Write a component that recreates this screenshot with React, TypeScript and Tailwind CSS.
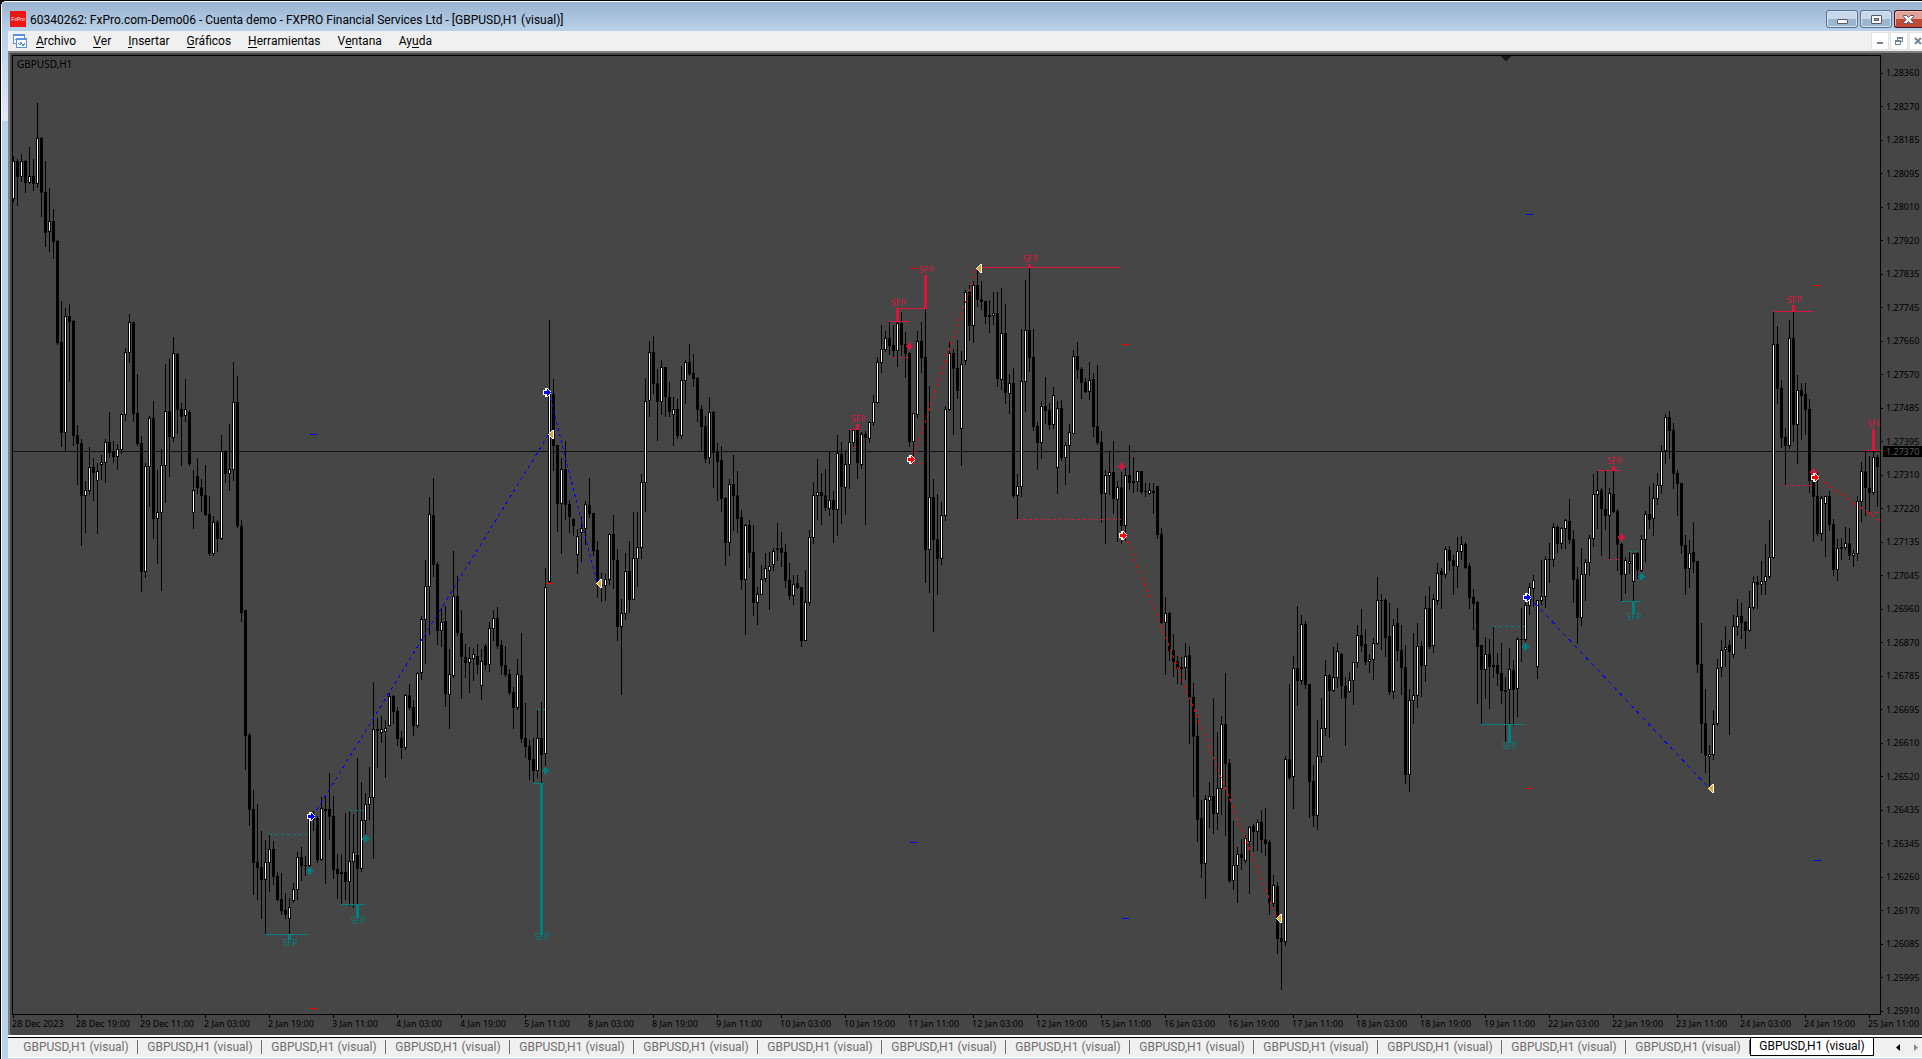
type Bar = [high: number, open: number, close: number, low: number];

interface Session {
  top: number;
  unit: number;
  bars: Bar[];
}

// Each session keeps its own vertical grid: row = top + value / unit.
const SESSIONS: Session[] = [
  {
    top: 80,
    unit: 2.958,
    bars: [
      [225, 352, 240, 360], [234, 240, 287, 373], [219, 287, 240, 301], [237, 240, 304, 334],
      [198, 304, 284, 307], [234, 284, 307, 328], [68, 307, 172, 319], [169, 172, 333, 405],
      [240, 331, 453, 493], [320, 450, 417, 509], [382, 417, 478, 530], [473, 476, 778, 783],
      [654, 775, 1044, 1086], [675, 1043, 699, 1098], [663, 698, 716, 893], [710, 713, 1053, 1083],
      [1021, 1050, 1077, 1198], [1062, 1074, 1231, 1379], [1186, 1230, 1213, 1340], [1086, 1216, 1145, 1228],
      [1118, 1145, 1162, 1246], [1133, 1186, 1157, 1343], [1109, 1138, 1130, 1183], [1062, 1132, 1071, 1192],
      [982, 1071, 1103, 1118], [1068, 1101, 1114, 1133], [1077, 1114, 1092, 1154], [985, 1095, 988, 1106],
      [793, 991, 805, 1009], [692, 808, 716, 837], [713, 716, 988, 1011], [870, 985, 1077, 1083],
      [1053, 1074, 1456, 1515], [1133, 1456, 1142, 1473], [994, 1145, 1000, 1263], [950, 1000, 1299, 1358],
      [1154, 1299, 1278, 1432], [1092, 1281, 1139, 1512], [840, 1142, 979, 1251], [825, 979, 1056, 1175],
      [760, 1059, 808, 1071], [808, 811, 976, 1047], [956, 973, 997, 1142], [885, 994, 973, 1011],
      [976, 982, 1136, 1142], [1154, 1281, 1213, 1328], [1118, 1172, 1207, 1225], [1180, 1204, 1231, 1278],
      [1139, 1228, 1287, 1290], [1231, 1284, 1402, 1408], [1290, 1402, 1308, 1408], [1302, 1308, 1358, 1396],
      [1050, 1358, 1098, 1361], [1095, 1098, 1166, 1192], [1018, 1166, 1151, 1216], [834, 1154, 953, 1186],
      [876, 953, 1319, 1325],
    ],
  },
  {
    top: 340,
    unit: 2.529,
    bars: [
      [455, 470, 690, 713], [683, 683, 1001, 1087], [994, 999, 1189, 1229], [1138, 1186, 1323, 1404],
      [1173, 1320, 1335, 1416], [1242, 1332, 1366, 1464], [1265, 1365, 1320, 1502], [1250, 1322, 1287, 1396],
      [1267, 1287, 1358, 1379], [1345, 1356, 1416, 1419], [1348, 1414, 1445, 1454], [1399, 1442, 1454, 1464],
      [1411, 1464, 1434, 1502], [1373, 1419, 1388, 1424], [1295, 1391, 1308, 1416], [1282, 1308, 1330, 1368],
      [1305, 1328, 1330, 1356], [1200, 1330, 1205, 1332], [1190, 1200, 1214, 1242], [1204, 1209, 1315, 1323],
      [1156, 1315, 1184, 1318], [1151, 1186, 1190, 1376], [1095, 1186, 1206, 1265], [1153, 1204, 1340, 1363],
      [1300, 1338, 1351, 1414], [1300, 1345, 1351, 1426], [1196, 1345, 1371, 1416], [1190, 1370, 1318, 1431],
      [1199, 1320, 1295, 1436], [1057, 1302, 1338, 1426], [1118, 1337, 1214, 1345], [1146, 1216, 1174, 1249],
      [1080, 1176, 1156, 1214], [865, 1158, 984, 1313], [956, 984, 989, 1082], [951, 995, 984, 1019],
      [961, 991, 981, 1108], [893, 976, 900, 976], [898, 900, 941, 971], [928, 938, 1009, 1027],
      [989, 1007, 1032, 1060], [895, 1032, 898, 1037], [870, 898, 931, 936], [910, 928, 976, 1001],
      [840, 976, 842, 981], [698, 842, 706, 860], [556, 708, 622, 819], [397, 625, 440, 746],
      [349, 443, 569, 599], [561, 567, 736, 771], [678, 736, 713, 776], [673, 711, 895, 928],
      [781, 897, 845, 984], [534, 850, 647, 855], [597, 647, 741, 749], [683, 741, 802, 908],
      [769, 802, 817, 855], [776, 817, 804, 893], [779, 806, 793, 862], [769, 799, 822, 845],
      [781, 875, 812, 910], [769, 774, 822, 835], [713, 822, 728, 840], [683, 731, 703, 761],
      [675, 703, 774, 781], [759, 771, 824, 847], [774, 822, 847, 852], [832, 845, 893, 898],
      [878, 890, 931, 984], [807, 931, 845, 936], [741, 847, 1009, 1019], [918, 1007, 1029, 1057],
      [1012, 1027, 1062, 1113], [1007, 1060, 1090, 1118], [936, 1090, 1007, 1108], [916, 1007, 1049, 1120],
      [577, 1047, 625, 1077],
    ],
  },
  {
    top: 290,
    unit: 3,
    bars: [
      [90, 876, 305, 879], [267, 312, 468, 543], [465, 465, 642, 726], [504, 643, 537, 792],
      [453, 537, 645, 690], [630, 642, 681, 729], [684, 687, 708, 738], [717, 795, 738, 852],
      [678, 728, 714, 816], [633, 717, 642, 765], [564, 645, 672, 684], [669, 669, 783, 798],
      [753, 780, 876, 924], [849, 885, 889, 936], [852, 888, 867, 933], [729, 870, 732, 885],
      [675, 732, 810, 897], [777, 810, 1011, 1053], [927, 1011, 969, 1215], [789, 972, 843, 990],
      [753, 843, 930, 969], [666, 930, 804, 930], [666, 807, 771, 891], [552, 774, 576, 807],
      [264, 579, 333, 666], [153, 333, 186, 381], [138, 186, 282, 312], [237, 279, 336, 453],
      [210, 336, 231, 375], [231, 231, 321, 381], [276, 321, 366, 381], [321, 375, 357, 468],
      [327, 357, 438, 447], [228, 438, 270, 447], [210, 273, 216, 342], [162, 216, 252, 258],
      [192, 249, 267, 291], [261, 264, 360, 396], [345, 357, 411, 483], [378, 408, 507, 519],
      [321, 504, 366, 522], [363, 366, 489, 594], [459, 486, 516, 633], [468, 510, 627, 666],
      [621, 624, 759, 828], [567, 759, 582, 798], [495, 582, 618, 723], [543, 615, 687, 729],
      [660, 681, 870, 900], [702, 870, 705, 1035], [690, 705, 789, 834], [705, 786, 939, 978],
      [891, 939, 912, 1005], [825, 915, 867, 915], [789, 867, 834, 876], [786, 843, 828, 960],
      [774, 825, 783, 843], [699, 781, 774, 813], [726, 774, 789, 831], [762, 786, 873, 894],
      [819, 870, 918, 930], [855, 918, 882, 945], [855, 879, 894, 897], [891, 891, 1053, 1071],
    ],
  },
  {
    top: 240,
    unit: 3,
    bars: [
      [990, 1203, 1086, 1203], [870, 1089, 891, 1098], [726, 894, 765, 912], [657, 768, 756, 840],
      [699, 756, 768, 855], [687, 765, 804, 813], [636, 807, 780, 828], [753, 780, 810, 909],
      [585, 810, 639, 888], [606, 642, 741, 852], [630, 744, 672, 825], [570, 675, 606, 747],
      [570, 609, 570, 621], [570, 570, 669, 717], [576, 675, 582, 687], [573, 582, 594, 855],
      [543, 597, 546, 609], [465, 549, 486, 558], [351, 489, 366, 492], [255, 369, 327, 399],
      [273, 330, 294, 336], [246, 294, 318, 345], [255, 315, 333, 351], [246, 333, 249, 381],
      [216, 249, 315, 348], [276, 312, 342, 414], [336, 339, 606, 621], [519, 606, 519, 669],
      [273, 525, 303, 534], [246, 303, 354, 399], [207, 351, 930, 1029], [438, 930, 771, 1059],
      [717, 771, 900, 1176], [762, 897, 957, 1065], [786, 957, 825, 975], [498, 828, 507, 843],
      [306, 510, 339, 513], [327, 339, 387, 585], [300, 384, 453, 477], [333, 567, 372, 678],
      [150, 363, 156, 375], [135, 156, 258, 303], [123, 258, 135, 309], [90, 135, 180, 201],
      [123, 177, 186, 210], [183, 183, 231, 252], [180, 225, 231, 279], [156, 228, 219, 255],
      [156, 219, 417, 441], [144, 420, 279, 450], [192, 279, 459, 492], [402, 462, 429, 522],
      [384, 429, 768, 774], [702, 768, 738, 837], [267, 741, 423, 771], [120, 426, 270, 516],
      [84, 270, 354, 396], [267, 351, 561, 573], [546, 558, 609, 690], [483, 609, 498, 657],
      [411, 498, 513, 552], [489, 510, 555, 570], [441, 555, 465, 567], [483, 684, 504, 762],
      [480, 504, 654, 663], [606, 654, 615, 735], [552, 618, 576, 699], [330, 582, 348, 582],
      [306, 348, 390, 417], [381, 387, 429, 477], [414, 426, 456, 459], [366, 456, 420, 480],
      [399, 417, 561, 591], [375, 558, 609, 615], [573, 606, 762, 849], [690, 762, 705, 912],
      [633, 708, 696, 765], [603, 696, 777, 822], [723, 780, 741, 906], [696, 741, 858, 912],
      [684, 858, 705, 903], [615, 705, 729, 750], [651, 723, 729, 759], [693, 726, 693, 756],
      [693, 693, 756, 762], [729, 753, 757, 771], [729, 762, 750, 765], [729, 753, 759, 822],
      [738, 738, 885, 897], [864, 882, 1149, 1152],
    ],
  },
  {
    top: 440,
    unit: 2.751,
    bars: [
      [432, 503, 476, 646], [473, 476, 580, 608], [534, 578, 611, 652], [594, 608, 630, 671],
      [597, 624, 630, 674], [558, 627, 594, 660], [567, 591, 710, 836], [668, 707, 817, 982],
      [756, 814, 1045, 1106], [990, 1040, 1166, 1205], [977, 1166, 988, 1263], [941, 993, 979, 1067],
      [710, 979, 1029, 1084], [803, 1029, 957, 1073], [759, 960, 781, 1032], [641, 781, 891, 1089],
      [878, 889, 1213, 1218], [1048, 1213, 1169, 1238], [1120, 1172, 1139, 1274], [1098, 1139, 1150, 1183],
      [1087, 1158, 1095, 1163], [1062, 1106, 1065, 1249], [1056, 1062, 1078, 1133], [1043, 1078, 1051, 1131],
      [1018, 1051, 1100, 1136], [1012, 1098, 1111, 1144], [1100, 1106, 1274, 1307], [1197, 1276, 1224, 1285],
      [1216, 1227, 1373, 1414], [1320, 1370, 1381, 1513], [869, 1381, 878, 1392], [671, 878, 930, 935],
      [594, 927, 627, 1015], [457, 627, 663, 732], [481, 663, 506, 674], [498, 506, 674, 685],
      [671, 671, 941, 1040], [894, 938, 1034, 1065], [770, 1034, 869, 1073], [710, 872, 792, 889],
      [605, 795, 646, 814], [644, 646, 690, 820], [569, 690, 652, 693], [558, 655, 580, 682],
      [586, 589, 677, 712], [652, 677, 710, 842], [638, 693, 660, 696], [611, 663, 611, 729],
      [509, 613, 536, 627], [465, 536, 567, 583], [520, 561, 611, 619], [589, 610, 602, 641],
      [545, 605, 558, 660], [377, 561, 440, 564], [424, 440, 443, 578], [435, 440, 545, 597],
      [448, 539, 693, 701], [492, 693, 509, 712], [462, 503, 580, 608],
    ],
  },
  {
    top: 400,
    unit: 3,
    bars: [
      [675, 750, 804, 885], [735, 801, 1125, 1152], [867, 1125, 900, 1176], [699, 903, 885, 972],
      [669, 888, 738, 924], [723, 738, 798, 891], [588, 798, 624, 846], [558, 624, 741, 747],
      [582, 738, 597, 759], [489, 603, 519, 615], [504, 513, 525, 627], [438, 525, 447, 534],
      [438, 450, 483, 513], [465, 480, 498, 585], [411, 501, 453, 564], [408, 456, 432, 480],
      [426, 432, 504, 507], [489, 498, 594, 627], [567, 591, 612, 690], [603, 606, 741, 912],
      [735, 735, 810, 972], [711, 810, 762, 897], [717, 762, 801, 927], [681, 795, 801, 834],
      [759, 795, 822, 858], [729, 819, 873, 912], [831, 870, 876, 1026], [744, 870, 807, 972],
      [780, 810, 870, 978], [711, 867, 717, 951], [624, 717, 720, 786], [606, 720, 615, 726],
      [549, 618, 561, 645], [525, 567, 540, 621], [600, 801, 600, 837], [480, 603, 588, 615],
      [468, 591, 477, 624], [429, 477, 480, 549], [369, 480, 381, 501], [375, 381, 432, 459],
      [381, 432, 384, 447], [357, 387, 360, 447], [297, 363, 420, 432], [390, 417, 540, 609],
      [501, 537, 654, 732], [444, 654, 522, 678], [477, 525, 486, 603], [405, 489, 414, 528],
      [222, 417, 282, 441], [210, 285, 270, 387], [264, 270, 327, 468], [210, 327, 348, 390],
      [264, 348, 279, 477], [210, 282, 336, 339], [327, 333, 435, 513], [429, 432, 525, 603],
      [471, 525, 480, 582], [456, 492, 484, 522], [459, 546, 459, 603], [456, 459, 510, 537],
      [405, 513, 417, 516], [333, 420, 342, 486], [258, 342, 360, 387], [249, 357, 294, 408],
      [219, 297, 255, 315], [135, 258, 153, 282], [42, 153, 51, 192], [33, 51, 93, 177],
      [69, 90, 222, 267], [210, 219, 252, 348], [249, 249, 438, 462], [405, 435, 507, 585],
      [420, 507, 459, 564], [366, 456, 486, 519], [483, 483, 795, 819], [669, 792, 972, 1059],
      [867, 969, 1068, 1119], [1035, 1071, 1062, 1160], [930, 1065, 972, 1080], [777, 972, 804, 978],
      [720, 804, 750, 831], [678, 749, 741, 801], [720, 735, 756, 1005], [645, 765, 678, 774],
      [597, 681, 648, 708],
    ],
  },
  {
    top: 260,
    unit: 3,
    bars: [
      [1029, 1068, 1089, 1137], [1083, 1086, 1113, 1167], [993, 1112, 1041, 1115], [948, 1044, 966, 1050],
      [948, 966, 975, 1047], [903, 975, 963, 1005], [852, 966, 948, 1005], [780, 951, 891, 957],
      [154, 894, 252, 897], [198, 252, 387, 432], [360, 384, 534, 564], [504, 531, 558, 675],
      [180, 558, 234, 567], [156, 234, 495, 546], [345, 495, 390, 612], [369, 390, 408, 540],
      [369, 402, 450, 525], [417, 447, 663, 699], [630, 660, 711, 846], [639, 708, 822, 828],
      [708, 822, 714, 843], [708, 732, 708, 891], [693, 708, 795, 813], [777, 792, 930, 948],
      [837, 930, 864, 963], [834, 868, 860, 900], [801, 864, 849, 870], [804, 849, 888, 900],
      [870, 888, 879, 921], [708, 882, 723, 903], [606, 726, 633, 786], [573, 633, 684, 768],
      [588, 684, 699, 759], [573, 699, 591, 705], [585, 591, 621, 741],
    ],
  },
];

const BAR_STEP = 4;
const FIRST_BAR = 13;

function buildCandles() {
  let dark = "";
  let light = "";
  let x = FIRST_BAR;
  for (const { top, unit, bars } of SESSIONS) {
    const row = (v: number) => Math.round(top + v / unit);
    for (const [high, open, close, low] of bars) {
      const bodyTop = row(Math.min(open, close));
      const bodyHeight = Math.max(1, row(Math.max(open, close)) - bodyTop);
      dark += `M${x} ${row(high)}h1V${row(low)}h-1z`;
      dark += `M${x - 1} ${bodyTop}h3v${bodyHeight}h-3z`;
      if (close <= open && bodyHeight > 2) {
        light += `M${x} ${bodyTop + 1}h1v${bodyHeight - 2}h-1z`;
      }
      x += BAR_STEP;
    }
  }
  return { dark, light };
}

const candles = buildCandles();

const TEAL = "#008080";
const CRIMSON = "#dc143c";
const RED = "#ff0000";
const BLUE = "#0000ff";

// level line from x1 to x2, stem at x down (or up) to `to`, label baseline at `label`
const SWEEPS = [
  { color: TEAL, x1: 265, x2: 309, y: 934, x: 289, to: 939, label: 946 },
  { color: TEAL, x1: 341, x2: 365, y: 904, x: 357, to: 917, label: 924 },
  { color: TEAL, x1: 533, x2: 545, y: 783, x: 541, to: 934, label: 940 },
  { color: TEAL, x1: 1481, x2: 1525, y: 724, x: 1509, to: 742, label: 749 },
  { color: TEAL, x1: 1621, x2: 1641, y: 601, x: 1633, to: 613, label: 620 },
  { color: CRIMSON, x1: 849, x2: 858, y: 429, x: 857, to: 424, label: 422 },
  { color: CRIMSON, x1: 889, x2: 909, y: 321, x: 897, to: 308, label: 306 },
  { color: CRIMSON, x1: 897, x2: 925, y: 308, x: 925, to: 275, label: 273 },
  { color: CRIMSON, x1: 977, x2: 1121, y: 267, x: 1029, to: 264, label: 262 },
  { color: CRIMSON, x1: 1597, x2: 1621, y: 470, x: 1613, to: 466, label: 464 },
  { color: CRIMSON, x1: 1773, x2: 1813, y: 311, x: 1793, to: 305, label: 303 },
  { color: CRIMSON, x1: 1865, x2: 1880, y: 450, x: 1873, to: 429, label: 427 },
];

const BREAK_LEVELS: [string, number, number, number][] = [
  [TEAL, 269, 308, 834],
  [TEAL, 349, 364, 810],
  [TEAL, 537, 545, 709],
  [TEAL, 1493, 1525, 626],
  [TEAL, 1629, 1639, 551],
  [CRIMSON, 853, 856, 447],
  [CRIMSON, 893, 908, 357],
  [CRIMSON, 913, 923, 463],
  [CRIMSON, 1017, 1121, 519],
  [CRIMSON, 1609, 1619, 559],
  [CRIMSON, 1785, 1812, 485],
  [CRIMSON, 1869, 1880, 512],
];

const STOPS: [string, number, number][] = [
  [BLUE, 310, 434],
  [BLUE, 1814, 860],
  [BLUE, 1526, 214],
  [BLUE, 910, 842],
  [BLUE, 1122, 918],
  [RED, 310, 1008],
  [RED, 546, 583],
  [RED, 910, 268],
  [RED, 1122, 344],
  [RED, 1526, 788],
  [RED, 1814, 285],
];

const TRADES: [string, number, number, number, number][] = [
  [BLUE, 313, 816, 549, 434],
  [BLUE, 549, 392, 597, 583],
  [BLUE, 1529, 597, 1709, 788],
  [RED, 913, 459, 977, 268],
  [RED, 1125, 535, 1277, 918],
  [RED, 1817, 477, 1880, 521],
];

const ENTRIES: [string, number, number][] = [
  [BLUE, 311, 816],
  [BLUE, 547, 392],
  [BLUE, 1527, 597],
  [RED, 911, 459],
  [RED, 1123, 535],
  [RED, 1815, 477],
];

const EXITS: [number, number][] = [
  [548, 434],
  [596, 583],
  [976, 268],
  [1276, 918],
  [1708, 788],
];

const SIGNALS: [string, number, number][] = [
  [TEAL, 309, 870],
  [TEAL, 365, 838],
  [TEAL, 545, 770],
  [TEAL, 1525, 646],
  [TEAL, 1641, 576],
  [CRIMSON, 909, 347],
  [CRIMSON, 1121, 467],
  [CRIMSON, 1621, 538],
  [CRIMSON, 1813, 473],
];

const PRICES = [
  "1.28360", "1.28270", "1.28185", "1.28095", "1.28010", "1.27920", "1.27835", "1.27745",
  "1.27660", "1.27570", "1.27485", "1.27395", "1.27310", "1.27220", "1.27135", "1.27045",
  "1.26960", "1.26870", "1.26785", "1.26695", "1.26610", "1.26520", "1.26435", "1.26345",
  "1.26260", "1.26170", "1.26085", "1.25995", "1.25910",
];

const TIMES = [
  "28 Dec 2023", "28 Dec 19:00", "29 Dec 11:00", "2 Jan 03:00", "2 Jan 19:00", "3 Jan 11:00",
  "4 Jan 03:00", "4 Jan 19:00", "5 Jan 11:00", "8 Jan 03:00", "8 Jan 19:00", "9 Jan 11:00",
  "10 Jan 03:00", "10 Jan 19:00", "11 Jan 11:00", "12 Jan 03:00", "12 Jan 19:00", "15 Jan 11:00",
  "16 Jan 03:00", "16 Jan 19:00", "17 Jan 11:00", "18 Jan 03:00", "18 Jan 19:00", "19 Jan 11:00",
  "22 Jan 03:00", "22 Jan 19:00", "23 Jan 11:00", "24 Jan 03:00", "24 Jan 19:00", "25 Jan 11:00",
];

// label split around the underlined access key
const MENU: [string, string, string][] = [
  ["", "A", "rchivo"],
  ["", "V", "er"],
  ["", "I", "nsertar"],
  ["", "G", "ráficos"],
  ["", "H", "erramientas"],
  ["V", "e", "ntana"],
  ["Ay", "u", "da"],
];

const TAB_COUNT = 15;

function tradeDash(x1: number, y1: number, x2: number, y2: number) {
  const dx = Math.abs(x2 - x1);
  const dy = Math.abs(y2 - y1);
  return (3 * Math.hypot(dx, dy)) / Math.max(dx, dy);
}

function PriceChart() {
  return (
    <svg className="block h-full w-full" shapeRendering="crispEdges" role="img" aria-label="GBPUSD,H1">
      <g transform="translate(-13 -56)">
        <path d="M1500 56h11l-5 5h-1z" fill="#1a1a1a" />
        <rect x="13" y="451" width="100%" height="1" fill="#111111" />
        <path d={candles.dark} fill="#000000" />
        <path d={candles.light} fill="#ffffff" />

        {BREAK_LEVELS.map(([color, x1, x2, y]) => (
          <path key={`${x1}-${y}`} d={`M${x1} ${y}.5H${x2}`} stroke={color} strokeDasharray="3 3" />
        ))}
        {SWEEPS.map((s) => (
          <g key={s.x} fill={s.color}>
            <rect x={s.x1} y={s.y} width={s.x2 - s.x1} height="1" />
            <rect x={s.x - 1} y={Math.min(s.y, s.to)} width="3" height={Math.abs(s.to - s.y) + 1} />
            <text x={s.x + 1} y={s.label} textAnchor="middle" className="font-['DejaVu_Sans'] text-[8px]">
              SFP
            </text>
          </g>
        ))}
        {STOPS.map(([color, x, y]) => (
          <rect key={`${x}-${y}`} x={x} y={y} width="7" height="1" fill={color} />
        ))}
        {TRADES.map(([color, x1, y1, x2, y2]) => (
          <line
            key={`${x1}-${y1}`}
            x1={x1}
            y1={y1}
            x2={x2}
            y2={y2}
            stroke={color}
            strokeDasharray={tradeDash(x1, y1, x2, y2)}
          />
        ))}
        {SIGNALS.map(([color, x, y]) => (
          <path
            key={`${x}-${y}`}
            transform={`translate(${x} ${y})${color === TEAL ? "" : " rotate(180 0.5 0)"}`}
            d="M0 -3h1v1h1v1h1v1h1v2h-1v-1h-1v3h-3v-3h-1v1h-1v-2h1v-1h1v-1h1z"
            fill={color}
          />
        ))}
        {ENTRIES.map(([color, x, y]) => (
          <g key={`${x}-${y}`} transform={`translate(${x} ${y})`}>
            <path d="M-4 -2h2v-2h3v1h1v1h1v1h1v3h-1v1h-1v1h-1v1h-3v-2h-2z" fill="#ffffff" />
            <path d="M-3 -1h3v-2h1v1h1v1h1v1h1v1h-1v1h-1v1h-1v1h-1v-2h-3z" fill={color} />
          </g>
        ))}
        {EXITS.map(([x, y]) => (
          <g key={`${x}-${y}`} transform={`translate(${x} ${y})`}>
            <path d="M0 0L4 -4h2v9h-2L0 1z" fill="#ffffff" />
            <path d="M1 0h1v-1h1v-1h1v-1h1v7h-1v-1h-1v-1h-1v-1h-1z" fill="#daa520" />
          </g>
        ))}
      </g>
    </svg>
  );
}

function PriceAxis() {
  return (
    <div className="relative -mb-px flex w-[41px] shrink-0 flex-col justify-between pt-[13px]">
      {PRICES.map((price) => (
        <div key={price} className="flex h-2.5 items-center gap-[3px] whitespace-nowrap">
          <span className="h-px w-0.5 shrink-0 bg-black" />
          {price}
        </div>
      ))}
      <div className="absolute top-[391px] right-0 left-0.5 flex h-[11px] items-center bg-black pl-[3px] text-[#5a5a5a]">
        1.27370
      </div>
    </div>
  );
}

function TimeAxis() {
  return (
    <div className="flex h-5 shrink-0 overflow-hidden">
      {TIMES.map((time) => (
        <div key={time} className="w-16 shrink-0 whitespace-nowrap">
          <div className="ml-px h-[3px] w-px bg-black" />
          <div className="leading-3">{time}</div>
        </div>
      ))}
    </div>
  );
}

function TitleBar() {
  const frame =
    "flex h-[18px] items-center justify-center border border-[#5b7190] bg-linear-to-b from-[#c6d8ea] from-50% to-[#9db6d0] to-50% shadow-[inset_0_0_0_1px_#d5e3f2]";
  return (
    <header className="flex h-[29px] shrink-0 items-center bg-linear-to-b from-[#99b4d1] to-[#b9d1ea] pt-[5px]">
      <svg className="ml-2 size-4" viewBox="0 0 16 16">
        <rect width="16" height="16" fill="#f01414" />
        <text x="8" y="10" textAnchor="middle" fill="#ffffff" className="font-['Liberation_Sans'] text-[5px]">
          FxPro
        </text>
      </svg>
      <h1 className="ml-1 flex-1 pt-0.5 text-[12px]">
        60340262: FxPro.com-Demo06 - Cuenta demo - FXPRO Financial Services Ltd - [GBPUSD,H1 (visual)]
      </h1>
      <div className="flex gap-0.5">
        <button type="button" aria-label="Minimizar" className={`${frame} w-8 rounded-[3px]`}>
          <span className="mt-1 h-[5px] w-[11px] rounded-[1px] border border-[#535666] bg-white" />
        </button>
        <button type="button" aria-label="Maximizar" className={`${frame} w-8 rounded-[3px]`}>
          <span className="flex h-[9px] w-[11px] items-center justify-center rounded-[1px] border border-[#535666] bg-white">
            <span className="h-[3px] w-[5px] border border-[#535666] bg-[#9db6d0]" />
          </span>
        </button>
        <button
          type="button"
          aria-label="Cerrar"
          className="flex h-[18px] w-7 items-center justify-center rounded-l-[3px] border border-r-0 border-[#431422] bg-linear-to-b from-[#e3a297] from-50% to-[#c04a35] to-50% shadow-[inset_1px_1px_0_0_#eebbb2]"
        >
          <svg className="h-[9px] w-[11px]" viewBox="0 0 11 9">
            <path
              d="M0.500 0.500h3l2 2 2-2h3v1l-2.500 3 2.500 3v1h-3l-2-2-2 2h-3v-1l2.500-3-2.500-3z"
              fill="#ffffff"
              stroke="#535666"
            />
          </svg>
        </button>
      </div>
    </header>
  );
}

function MenuBar() {
  const mdi = "flex h-[18px] w-[18px] items-center justify-center border border-[#e3e3e3] bg-white";
  return (
    <nav className="flex h-5 shrink-0 items-center bg-[#f0f0f0] text-[12px]">
      <svg className="ml-1 size-4" viewBox="0 0 16 16" shapeRendering="crispEdges">
        <rect x="1" y="1" width="11" height="9" fill="#ffffff" stroke="#5b93d6" />
        <rect x="1" y="1" width="11" height="2" fill="#5b93d6" />
        <path d="M3 7l2-2 1 2 2-1" fill="none" stroke="#5b93d6" />
        <rect x="4.500" y="5.500" width="10" height="9" fill="#ffffff" stroke="#5b93d6" />
        <rect x="5" y="6" width="10" height="1" fill="#5b93d6" />
        <path d="M6 10l2 2 1-3 2 4 2-3" fill="none" stroke="#5b93d6" />
      </svg>
      <ul className="ml-2 flex flex-1 gap-[17px]">
        {MENU.map(([before, key, after]) => (
          <li key={before + key + after}>
            <a href="#" className="block">
              {before}
              <span className="inline-block border-b border-black leading-3">{key}</span>
              {after}
            </a>
          </li>
        ))}
      </ul>
      <div className="flex gap-px">
        <button type="button" aria-label="Minimizar ventana" className={mdi}>
          <span className="mt-1 h-0.5 w-1.5 bg-[#748596]" />
        </button>
        <button type="button" aria-label="Restaurar ventana" className={mdi}>
          <svg className="size-2" viewBox="0 0 8 8" shapeRendering="crispEdges">
            <path d="M2 0h6v5h-2v-1h1v-2h-4v1h-1zM0 3h6v5h-6zM1 5v2h4v-2z" fill="#748596" fillRule="evenodd" />
          </svg>
        </button>
        <button
          type="button"
          aria-label="Cerrar ventana"
          className="flex h-[18px] w-[13px] items-center justify-end border border-r-0 border-[#e3e3e3] bg-white"
        >
          <svg className="size-2" viewBox="0 0 8 8">
            <path d="M1 1l6 6M7 1l-6 6" stroke="#748596" strokeWidth="2" />
          </svg>
        </button>
      </div>
    </nav>
  );
}

function ChartTabs() {
  return (
    <div className="flex h-5 shrink-0 overflow-hidden border-t border-black bg-[#f0f0f0] pl-1.5 text-[12px]">
      {Array.from({ length: TAB_COUNT }, (_, i) =>
        i === TAB_COUNT - 1 ? (
          <button
            key={i}
            type="button"
            className="-mt-px h-[19px] w-[124px] shrink-0 border border-t-0 border-black bg-white"
          >
            GBPUSD,H1 (visual)
          </button>
        ) : (
          <button key={i} type="button" className="relative h-[18px] w-[124px] shrink-0 text-[#6d6d6d]">
            GBPUSD,H1 (visual)
            <span className="absolute top-0.5 right-0 h-3.5 w-px bg-[#6d6d6d]" />
          </button>
        ),
      )}
      <div className="ml-[22px] flex flex-1 items-center gap-3.5">
        <button type="button" aria-label="Anterior">
          <svg className="h-[7px] w-1" viewBox="0 0 4 7">
            <path d="M4 0v7L0 3.500z" />
          </svg>
        </button>
        <button type="button" aria-label="Siguiente">
          <svg className="h-[7px] w-1" viewBox="0 0 4 7">
            <path d="M0 0v7l4-3.500z" fill="#8a8a8a" />
          </svg>
        </button>
      </div>
    </div>
  );
}

export default function App() {
  return (
    <div className="h-screen overflow-hidden border-t border-l border-black bg-black font-['Roboto','Noto_Sans',sans-serif] text-black">
      <div className="flex h-full flex-col overflow-hidden rounded-tl-[5px] border-t border-l border-white bg-[#b9d1ea]">
        <TitleBar />
        <div className="flex min-h-0 flex-1">
          <div className="w-1.5 shrink-0 bg-[#b9d1ea]">
            <div className="h-[90px] bg-linear-to-b from-[#b9d1ea] to-[#dfe9f5]" />
          </div>
          <div className="flex min-w-0 flex-1 flex-col">
            <MenuBar />
            <main className="flex min-h-0 flex-1 flex-col border-t-2 border-l-2 border-[#808080] bg-[#464646] pt-0.5 pl-0.5 font-['Noto_Sans',sans-serif] text-[9px]">
              <div className="flex min-h-0 flex-1">
                <div className="relative min-w-0 flex-1 border border-black">
                  <PriceChart />
                  <span className="absolute top-0.5 left-1 text-[10px] leading-3">GBPUSD,H1</span>
                </div>
                <PriceAxis />
              </div>
              <TimeAxis />
            </main>
            <div className="h-0.5 shrink-0 bg-white" />
            <ChartTabs />
            <div className="h-px shrink-0 bg-white" />
            <div className="h-px shrink-0 bg-[#b9d1ea]" />
          </div>
        </div>
      </div>
    </div>
  );
}
